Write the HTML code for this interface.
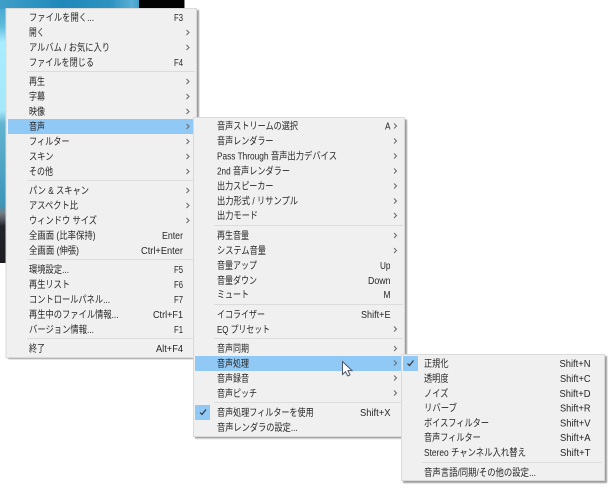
<!DOCTYPE html>
<html lang="ja"><head><meta charset="utf-8"><title>Menu</title>
<style>
html,body{margin:0;padding:0;background:#fff;width:612px;height:489px;overflow:hidden}
svg{display:block;position:absolute;left:0;top:0}
text{font-family:"Liberation Sans","Noto Sans CJK JP",sans-serif;font-size:10px;fill:#262626}
svg g{filter:blur(.25px)}
.a{fill:none;stroke:#666;stroke-width:1}
.s{fill:#dcdcdc}
</style></head><body>
<svg width="612" height="489" viewBox="0 0 612 489" xmlns="http://www.w3.org/2000/svg">
<defs>
<linearGradient id="l" x1="0" y1="0" x2="0" y2="1">
<stop offset="0" stop-color="#3f9fc8"/><stop offset=".1" stop-color="#5fbcdc"/><stop offset=".16" stop-color="#a8ecff"/><stop offset=".42" stop-color="#a6e8fa"/><stop offset=".47" stop-color="#62b4d0"/><stop offset=".78" stop-color="#3d96b8"/><stop offset=".81" stop-color="#777c84"/><stop offset=".84" stop-color="#4a4c56"/><stop offset=".86" stop-color="#22242c"/><stop offset="1" stop-color="#1c1c22"/>
</linearGradient>
<linearGradient id="t" x1="0" y1="0" x2="1" y2="0">
<stop offset="0" stop-color="#3f9fc8"/><stop offset=".45" stop-color="#1f88ba"/><stop offset=".8" stop-color="#2e93c0"/><stop offset=".95" stop-color="#58b0d4"/><stop offset="1" stop-color="#3f9fc8"/>
</linearGradient>
<filter id="b" x="-5%" y="-5%" width="110%" height="110%"><feGaussianBlur stdDeviation=".7"/></filter>
</defs>
<rect x="0" y="0" width="7" height="263" fill="url(#l)"/>
<rect x="0" y="0" width="139" height="9" fill="url(#t)"/>
<rect x="139" y="0" width="45" height="9" fill="#030303"/>
<rect x="184" y="0" width="1" height="9" fill="#888"/>

<!-- Menu 1 -->
<rect x="8" y="10" width="191" height="349" fill="#9c9c9c" filter="url(#b)"/>
<rect x="6" y="8.500" width="190.500" height="349" fill="#f0f0f0" stroke="#dadada" stroke-width="1"/>
<rect x="8" y="119" width="186" height="15" fill="#90c8f6"/>
<rect x="27" y="71" width="168" height="1" class="s"/>
<rect x="27" y="180" width="168" height="1" class="s"/>
<rect x="27" y="259" width="168" height="1" class="s"/>
<rect x="27" y="338" width="168" height="1" class="s"/>
<g>
<text x="29" y="21" textLength="65" lengthAdjust="spacingAndGlyphs">ファイルを開く...</text>
<text x="29" y="36" textLength="15.500" lengthAdjust="spacingAndGlyphs">開く</text>
<text x="29" y="51" textLength="81" lengthAdjust="spacingAndGlyphs">アルバム / お気に入り</text>
<text x="29" y="66" textLength="65" lengthAdjust="spacingAndGlyphs">ファイルを閉じる</text>
<text x="29" y="85" textLength="16" lengthAdjust="spacingAndGlyphs">再生</text>
<text x="29" y="100" textLength="16" lengthAdjust="spacingAndGlyphs">字幕</text>
<text x="29" y="115" textLength="16" lengthAdjust="spacingAndGlyphs">映像</text>
<text x="29" y="130" textLength="16" lengthAdjust="spacingAndGlyphs">音声</text>
<text x="29" y="145" textLength="40.500" lengthAdjust="spacingAndGlyphs">フィルター</text>
<text x="29" y="160" textLength="24.500" lengthAdjust="spacingAndGlyphs">スキン</text>
<text x="29" y="175" textLength="24" lengthAdjust="spacingAndGlyphs">その他</text>
<text x="29" y="194" textLength="60" lengthAdjust="spacingAndGlyphs">パン &amp; スキャン</text>
<text x="29" y="209" textLength="49" lengthAdjust="spacingAndGlyphs">アスペクト比</text>
<text x="29" y="224" textLength="68" lengthAdjust="spacingAndGlyphs">ウィンドウ サイズ</text>
<text x="29" y="239" textLength="66.500" lengthAdjust="spacingAndGlyphs">全画面 (比率保持)</text>
<text x="29" y="254" textLength="50" lengthAdjust="spacingAndGlyphs">全画面 (伸張)</text>
<text x="29" y="273" textLength="40" lengthAdjust="spacingAndGlyphs">環境設定...</text>
<text x="29" y="288" textLength="41" lengthAdjust="spacingAndGlyphs">再生リスト</text>
<text x="29" y="303" textLength="81" lengthAdjust="spacingAndGlyphs">コントロールパネル...</text>
<text x="29" y="318" textLength="89.500" lengthAdjust="spacingAndGlyphs">再生中のファイル情報...</text>
<text x="29" y="333" textLength="65" lengthAdjust="spacingAndGlyphs">バージョン情報...</text>
<text x="29" y="352" textLength="16" lengthAdjust="spacingAndGlyphs">終了</text>
<text x="174" y="21" textLength="9" lengthAdjust="spacingAndGlyphs">F3</text>
<text x="174" y="66" textLength="9" lengthAdjust="spacingAndGlyphs">F4</text>
<text x="162" y="239" textLength="21" lengthAdjust="spacingAndGlyphs">Enter</text>
<text x="141" y="254" textLength="42" lengthAdjust="spacingAndGlyphs">Ctrl+Enter</text>
<text x="174" y="273" textLength="9" lengthAdjust="spacingAndGlyphs">F5</text>
<text x="174" y="288" textLength="9" lengthAdjust="spacingAndGlyphs">F6</text>
<text x="174" y="303" textLength="9" lengthAdjust="spacingAndGlyphs">F7</text>
<text x="153" y="318" textLength="30" lengthAdjust="spacingAndGlyphs">Ctrl+F1</text>
<text x="174" y="333" textLength="9" lengthAdjust="spacingAndGlyphs">F1</text>
<text x="156" y="352" textLength="27" lengthAdjust="spacingAndGlyphs">Alt+F4</text>
</g>
<path class="a" d="M186.500 30l2.500 2.500-2.500 2.500M186.500 45l2.500 2.500-2.500 2.500M186.500 79l2.500 2.500-2.500 2.500M186.500 94l2.500 2.500-2.500 2.500M186.500 109l2.500 2.500-2.500 2.500M186.500 124l2.500 2.500-2.500 2.500M186.500 139l2.500 2.500-2.500 2.500M186.500 154l2.500 2.500-2.500 2.500M186.500 169l2.500 2.500-2.500 2.500M186.500 188l2.500 2.500-2.500 2.500M186.500 203l2.500 2.500-2.500 2.500M186.500 218l2.500 2.500-2.500 2.500"/>

<!-- Menu 2 -->
<rect x="195" y="119.500" width="212" height="319" fill="#9c9c9c" filter="url(#b)"/>
<rect x="193.500" y="117.500" width="211" height="319" fill="#f0f0f0" stroke="#dadada" stroke-width="1"/>
<rect x="195" y="356" width="206" height="15" fill="#90c8f6"/>
<rect x="195" y="405" width="15" height="15" fill="#90c8f6"/>
<path d="M200 412.500l2 2 4-5" fill="none" stroke="#333" stroke-width="1.200"/>
<rect x="214" y="225" width="189" height="1" class="s"/>
<rect x="214" y="304" width="189" height="1" class="s"/>
<rect x="214" y="338" width="189" height="1" class="s"/>
<rect x="214" y="402" width="189" height="1" class="s"/>
<g>
<text x="217" y="129.500" textLength="81" lengthAdjust="spacingAndGlyphs">音声ストリームの選択</text>
<text x="217" y="144.500" textLength="56.500" lengthAdjust="spacingAndGlyphs">音声レンダラー</text>
<text x="217" y="159.500" textLength="120" lengthAdjust="spacingAndGlyphs">Pass Through 音声出力デバイス</text>
<text x="217" y="174.500" textLength="73" lengthAdjust="spacingAndGlyphs">2nd 音声レンダラー</text>
<text x="217" y="189.500" textLength="56.500" lengthAdjust="spacingAndGlyphs">出力スピーカー</text>
<text x="217" y="204.500" textLength="81" lengthAdjust="spacingAndGlyphs">出力形式 / リサンプル</text>
<text x="217" y="219" textLength="41" lengthAdjust="spacingAndGlyphs">出力モード</text>
<text x="217" y="239" textLength="32" lengthAdjust="spacingAndGlyphs">再生音量</text>
<text x="217" y="254" textLength="49" lengthAdjust="spacingAndGlyphs">システム音量</text>
<text x="217" y="269" textLength="40" lengthAdjust="spacingAndGlyphs">音量アップ</text>
<text x="217" y="284" textLength="40" lengthAdjust="spacingAndGlyphs">音量ダウン</text>
<text x="217" y="298" textLength="32" lengthAdjust="spacingAndGlyphs">ミュート</text>
<text x="217" y="318" textLength="48" lengthAdjust="spacingAndGlyphs">イコライザー</text>
<text x="217" y="333" textLength="53" lengthAdjust="spacingAndGlyphs">EQ プリセット</text>
<text x="217" y="352" textLength="32" lengthAdjust="spacingAndGlyphs">音声同期</text>
<text x="217" y="367" textLength="32" lengthAdjust="spacingAndGlyphs">音声処理</text>
<text x="217" y="382" textLength="32" lengthAdjust="spacingAndGlyphs">音声録音</text>
<text x="217" y="397" textLength="40" lengthAdjust="spacingAndGlyphs">音声ピッチ</text>
<text x="217" y="416" textLength="96.700" lengthAdjust="spacingAndGlyphs">音声処理フィルターを使用</text>
<text x="217" y="431" textLength="80.700" lengthAdjust="spacingAndGlyphs">音声レンダラの設定...</text>
<text x="385" y="129.500" textLength="5.500" lengthAdjust="spacingAndGlyphs">A</text>
<text x="380" y="269" textLength="10.500" lengthAdjust="spacingAndGlyphs">Up</text>
<text x="368" y="284" textLength="22.500" lengthAdjust="spacingAndGlyphs">Down</text>
<text x="383.500" y="298" textLength="7" lengthAdjust="spacingAndGlyphs">M</text>
<text x="361" y="318" textLength="29.500" lengthAdjust="spacingAndGlyphs">Shift+E</text>
<text x="360" y="416" textLength="30.500" lengthAdjust="spacingAndGlyphs">Shift+X</text>
</g>
<path class="a" d="M394 123.500l2.500 2.500-2.500 2.500M394 138.500l2.500 2.500-2.500 2.500M394 153.500l2.500 2.500-2.500 2.500M394 168.500l2.500 2.500-2.500 2.500M394 183.500l2.500 2.500-2.500 2.500M394 198.500l2.500 2.500-2.500 2.500M394 213l2.500 2.500-2.500 2.500M394 233l2.500 2.500-2.500 2.500M394 248l2.500 2.500-2.500 2.500M394 326.500l2.500 2.500-2.500 2.500M394 346l2.500 2.500-2.500 2.500M394 360.500l2.500 2.500-2.500 2.500M394 375.500l2.500 2.500-2.500 2.500M394 390.500l2.500 2.500-2.500 2.500"/>

<!-- Menu 3 -->
<rect x="403" y="356" width="204" height="127" fill="#9c9c9c" filter="url(#b)"/>
<rect x="401.500" y="354.500" width="203" height="126" fill="#f0f0f0" stroke="#dadada" stroke-width="1"/>
<rect x="403" y="356" width="15" height="15" fill="#90c8f6"/>
<path d="M407.500 363.500l2 2 4-5" fill="none" stroke="#333" stroke-width="1.200"/>
<rect x="422" y="462" width="180" height="1" class="s"/>
<g>
<text x="424" y="367" textLength="24.500" lengthAdjust="spacingAndGlyphs">正規化</text>
<text x="424" y="382" textLength="24.500" lengthAdjust="spacingAndGlyphs">透明度</text>
<text x="424" y="397" textLength="24.500" lengthAdjust="spacingAndGlyphs">ノイズ</text>
<text x="424" y="411.500" textLength="33" lengthAdjust="spacingAndGlyphs">リバーブ</text>
<text x="424" y="426.500" textLength="65" lengthAdjust="spacingAndGlyphs">ボイスフィルター</text>
<text x="424" y="441" textLength="56.700" lengthAdjust="spacingAndGlyphs">音声フィルター</text>
<text x="424" y="456" textLength="102" lengthAdjust="spacingAndGlyphs">Stereo チャンネル入れ替え</text>
<text x="424" y="476" textLength="112" lengthAdjust="spacingAndGlyphs">音声言語/同期/その他の設定...</text>
<text x="559.500" y="367" textLength="31" lengthAdjust="spacingAndGlyphs">Shift+N</text>
<text x="560" y="382" textLength="30.500" lengthAdjust="spacingAndGlyphs">Shift+C</text>
<text x="559.500" y="397" textLength="31" lengthAdjust="spacingAndGlyphs">Shift+D</text>
<text x="560" y="411.500" textLength="30.500" lengthAdjust="spacingAndGlyphs">Shift+R</text>
<text x="560" y="426.500" textLength="30.500" lengthAdjust="spacingAndGlyphs">Shift+V</text>
<text x="560" y="441" textLength="30.500" lengthAdjust="spacingAndGlyphs">Shift+A</text>
<text x="560" y="456" textLength="30.500" lengthAdjust="spacingAndGlyphs">Shift+T</text>
</g>

<!-- Cursor -->
<path d="M342.500 361.500v13l3-2.800 2.200 4.300 2.300-1.200-2.100-4.200h4.100z" fill="#fff" stroke="#4c5668" stroke-width="1"/>
</svg>
</body></html>
